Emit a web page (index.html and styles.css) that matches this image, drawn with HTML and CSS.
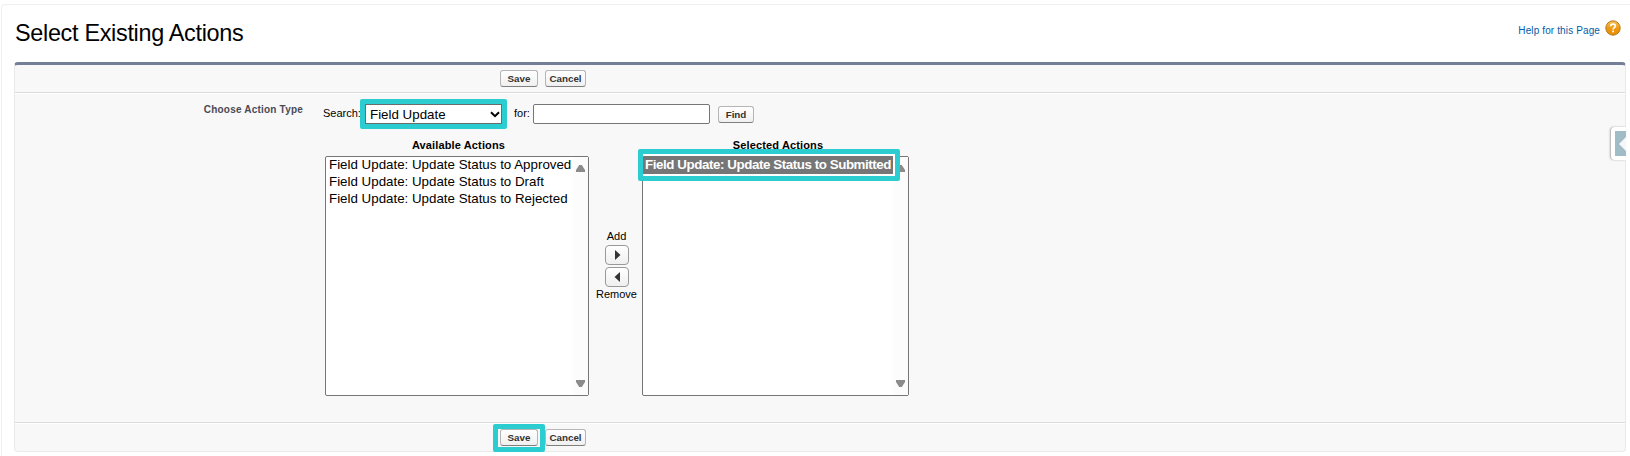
FILE: index.html
```html
<!DOCTYPE html>
<html lang="en">
<head>
<meta charset="utf-8">
<title>Select Existing Actions</title>
<link rel="stylesheet" href="styles.css">
</head>
<body>
<main class="page">
  <header class="head">
    <h1 class="title">Select Existing Actions</h1>
    <a class="help"><span class="help-text">Help for this Page</span>
      <svg class="help-icon" width="16" height="16" viewBox="0 0 16 16">
        <defs><linearGradient id="g" x1="0" y1="0" x2="0" y2="1"><stop offset="0" stop-color="#f8c25c"/><stop offset=".5" stop-color="#f09a14"/><stop offset="1" stop-color="#e88a00"/></linearGradient></defs>
        <circle cx="8" cy="8" r="7.2" fill="url(#g)" stroke="#a9700f" stroke-width=".9"/>
        <path d="M5.8 6.2C5.8 3.5 10.3 3.6 10.3 6.1C10.3 7.7 8.1 7.7 8.1 9.5" fill="none" stroke="#fff" stroke-width="1.7"/>
        <rect x="7.2" y="10.6" width="1.8" height="1.7" fill="#fff"/>
      </svg>
    </a>
  </header>
  <section class="panel">
    <div class="bar bar-top">
      <span class="btn save">Save</span><span class="btn cancel">Cancel</span>
    </div>
    <div class="content">
      <div class="label">Choose Action Type</div>
      <div class="fields">
        <div class="search">
          <span class="search-label">Search:</span>
          <div class="select">Field Update
            <svg class="chev" width="10" height="7" viewBox="0 0 10 7"><path d="M1 1.2L5 5.2L9 1.2" fill="none" stroke="#000" stroke-width="2"/></svg>
            <i class="mark mark-select"></i>
          </div>
          <span class="for">for:</span>
          <input class="text" type="text" aria-label="Search text">
          <span class="btn find">Find</span>
        </div>
        <div class="duel">
          <div class="col">
            <div class="col-title">Available Actions</div>
            <div class="list">
              <div class="rows">
                <div class="row">Field Update: Update Status to Approved</div>
                <div class="row">Field Update: Update Status to Draft</div>
                <div class="row">Field Update: Update Status to Rejected</div>
              </div>
              <div class="scroll"><svg width="9" height="7"><path d="M3.2 0H5.8L9 5V7H0V5Z" fill="#8b8b8b"/></svg><svg width="9" height="7"><path d="M0 0H9V2L5.8 7H3.2L0 2Z" fill="#8b8b8b"/></svg></div>
            </div>
          </div>
          <div class="move">
            <span>Add</span>
            <span class="arrow"><svg width="24" height="20"><path d="M10 5V15L15.5 10Z" fill="#333"/></svg></span>
            <span class="arrow"><svg width="24" height="20"><path d="M15 5V15L9.5 10Z" fill="#333"/></svg></span>
            <span>Remove</span>
          </div>
          <div class="col col-selected">
            <div class="col-title">Selected Actions</div>
            <div class="list">
              <div class="rows"><div class="row chosen">Field Update: Update Status to Submitted</div></div>
              <div class="scroll"><svg width="9" height="7"><path d="M3.2 0H5.8L9 5V7H0V5Z" fill="#8b8b8b"/></svg><svg width="9" height="7"><path d="M0 0H9V2L5.8 7H3.2L0 2Z" fill="#8b8b8b"/></svg></div>
              <i class="mark mark-row"></i>
            </div>
          </div>
        </div>
      </div>
    </div>
    <div class="bar bar-bottom">
      <span class="btn save">Save<i class="mark mark-save"></i></span><span class="btn cancel">Cancel</span>
    </div>
    <div class="tab"><svg width="11" height="25"><rect width="11" height="25" fill="#a0bcc7"/><path d="M11 6L4 13L11 20Z" fill="#f7f7f7"/></svg></div>
  </section>
</main>
</body>
</html>
```
FILE: styles.css
```css
* { box-sizing: border-box; }
body { margin: 0; background: #fff; color: #000; font-family: "Liberation Sans", Arial, sans-serif; font-size: 11px; overflow: hidden; }
.page { margin: 4px 0 0 1px; height: 452px; border: 1px solid #f0f0f0; border-right: 0; border-bottom: 0; border-radius: 4px 0 0 0; padding-left: 12px; padding-right: 4px; }
.head { display: flex; justify-content: space-between; height: 57px; }
.title { margin: 15px 0 0 1px; font-size: 23.4px; letter-spacing: -.3px; line-height: 26px; font-weight: 400; }
.help { display: flex; align-items: flex-start; gap: 5px; margin: 15px 5px 0 0; color: #015ba7; font-size: 10px; }
.help-text { line-height: 12px; margin-top: 5px; letter-spacing: .12px; }
.panel { position: relative; height: 390px; background: #f8f8f8; border: 1px solid #eaeaea; border-top: 3px solid #747e96; border-bottom: 1px solid #eaeaea; border-radius: 4px; }
.bar { display: flex; align-items: flex-start; gap: 7px; padding-left: 485px; }
.bar-top { height: 28px; padding-top: 5px; border-bottom: 1px solid #dbdbdb; }
.bar-bottom { height: 29px; padding-top: 6px; border-top: 1px solid #dbdbdb; box-shadow: inset 0 1px #fff; }
.btn { position: relative; height: 17px; border: 1px solid #b5b5b5; border-bottom-color: #7f7f7f; border-radius: 3px; background: linear-gradient(#fff, #f0f0f0); color: #333; font-size: 9.8px; font-weight: 700; line-height: 15px; text-align: center; }
.save { width: 38px; }
.cancel { width: 41px; }
.find { width: 36px; margin: 2px 0 0 8px; }
.content { display: flex; height: 329px; border-top: 1px solid #fff; }
.label { width: 288px; padding: 9px 0 0; text-align: right; color: #4a4a56; font-size: 10px; letter-spacing: .2px; line-height: 14px; font-weight: 700; }
.fields { padding-left: 19px; }
.search { display: flex; height: 44px; padding-top: 10px; }
.search-label { width: 43px; padding-left: 1px; line-height: 18px; }
.select { position: relative; display: flex; justify-content: space-between; align-items: center; width: 137px; height: 20px; padding: 0 1px 0 4px; border: 1px solid #6c6c6c; background: #fff; font-size: 13.33px; }
.for { width: 31px; padding-left: 12px; line-height: 18px; white-space: nowrap; }
.text { width: 177px; height: 20px; border: 1px solid #767676; border-radius: 2px; background: #fff; }
.duel { display: flex; margin-left: 3px; }
.col { width: 264px; }
.col-selected { width: 267px; }
.col-title { height: 18px; padding-left: 3px; line-height: 14px; font-weight: 700; text-align: center; letter-spacing: .13px; }
.col-selected .col-title { padding-left: 5px; }
.list { position: relative; display: flex; justify-content: space-between; height: 240px; border: 1px solid #767676; border-radius: 2px; background: #fff; }
.rows { flex: 1; min-width: 0; white-space: nowrap; }
.row { height: 17px; padding-left: 3px; font-size: 13.33px; line-height: 16px; }
.chosen { height: 18px; padding-left: 2px; background: #767676; color: #fff; font-weight: 700; letter-spacing: -.42px; }
.scroll { display: flex; flex-direction: column; flex-shrink: 0; justify-content: space-between; align-items: center; width: 15px; padding: 8px 0; background: #fcfcfc; }
.move { width: 53px; display: flex; flex-direction: column; align-items: center; padding: 91px 0 0 2px; line-height: 14px; }
.arrow { width: 24px; height: 20px; margin-top: 2px; border: 1px solid #999; border-radius: 4px; background: linear-gradient(#fff, #efefef); }
.arrow svg { display: block; margin: -1px; }
.mark { position: absolute; border: 5px solid #2ccdd1; border-radius: 2px; }
.mark-select { left: -6px; top: -6px; width: 147px; height: 30px; }
.mark-row { left: -5px; top: -8px; width: 262px; height: 32px; box-shadow: inset -2px -2px #fff, inset 0 2px #fff; }
.mark-save { left: -8px; top: -6px; width: 52px; height: 28px; }
.tab { position: absolute; right: -1px; top: 62px; width: 15px; height: 33px; padding: 4px 0 4px 4px; border-radius: 4px 0 0 4px; background: #fff; box-shadow: -1px 0 2px #aaa; }
.tab svg { display: block; }
```
